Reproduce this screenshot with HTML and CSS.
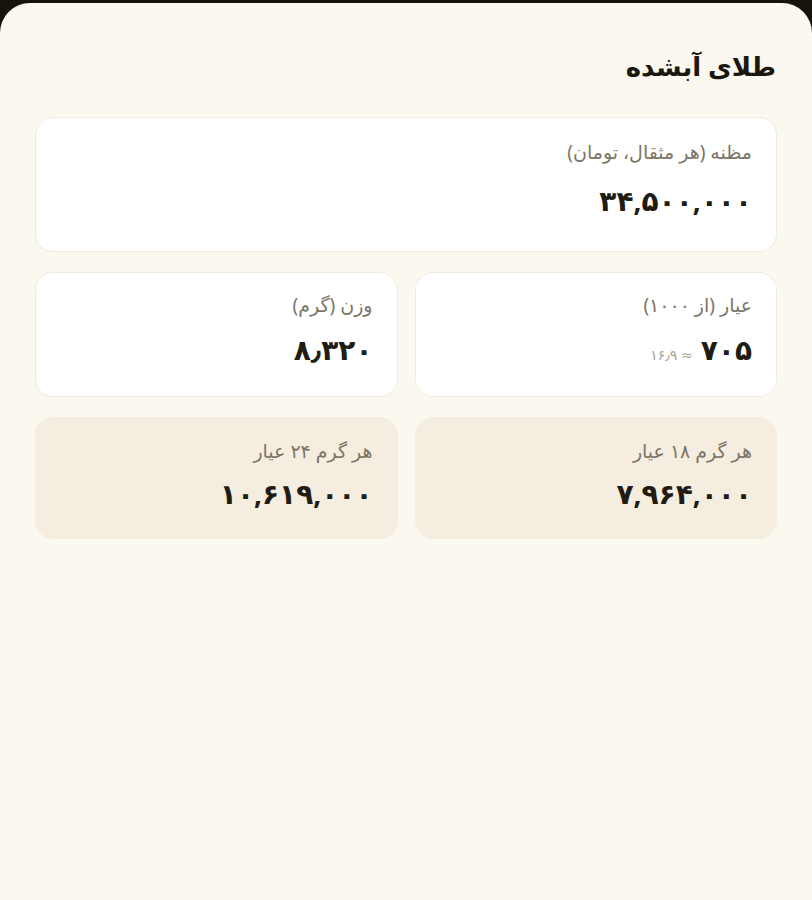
FILE: index.html
```html
<!DOCTYPE html>
<html lang="fa" dir="rtl">
<head>
    <meta charset="UTF-8">
    <meta name="viewport" content="width=device-width, initial-scale=1.0">
    <title>طلای آبشده</title>
    <link rel="stylesheet" href="styles.css">
</head>
<body>
    <div class="sheet">
        <h1 class="title">طلای آبشده</h1>

        <div class="card">
            <div class="label">مظنه (هر مثقال، تومان)</div>
            <div class="value">۳۴,۵۰۰,۰۰۰</div>
        </div>

        <div class="row">
            <div class="card">
                <div class="label">عیار (از ۱۰۰۰)</div>
                <div class="value">
                    <span>۷۰۵</span>
                    <span class="approx">≈ ۱۶٫۹</span>
                </div>
            </div>
            <div class="card">
                <div class="label">وزن (گرم)</div>
                <div class="value">۸٫۳۲۰</div>
            </div>
        </div>

        <div class="row">
            <div class="card card-tint">
                <div class="label">هر گرم ۱۸ عیار</div>
                <div class="value">۷,۹۶۴,۰۰۰</div>
            </div>
            <div class="card card-tint">
                <div class="label">هر گرم ۲۴ عیار</div>
                <div class="value">۱۰,۶۱۹,۰۰۰</div>
            </div>
        </div>
    </div>
</body>
</html>
```

FILE: styles.css
```css
html, body {
    margin: 0;
    height: 100%;
}
body {
    background-color: #16130c;
    font-family: "Noto Sans", "DejaVu Sans", sans-serif;
    color: #221d13;
    padding-top: 3px;
    box-sizing: border-box;
}
.sheet {
    background-color: #faf8ef;
    border-radius: 30px 30px 0 0;
    min-height: 100%;
    padding: 44px 35px 40px;
    box-sizing: border-box;
}
.title {
    margin: 0 1px 32px 0;
    font-size: 26px;
    font-weight: 800;
    line-height: 38px;
    color: #1b170f;
}
.card {
    background-color: #fff;
    border: 1px solid #efebdf;
    border-radius: 18px;
    padding: 20px 24px 0;
    height: 135px;
    box-sizing: border-box;
}
.row {
    display: flex;
    gap: 17px;
    margin-top: 20px;
}
.row .card {
    flex: 1;
    height: 125px;
    padding-top: 18px;
}
.row .card-tint {
    background-color: #f4ede0;
    border-color: #f4ede0;
    height: 122px;
    padding-top: 19px;
}
.label {
    font-size: 19px;
    line-height: 28px;
    color: #7b7566;
}
.value {
    display: flex;
    align-items: baseline;
    gap: 8px;
    margin-top: 15px;
    font-size: 28px;
    font-weight: bold;
    line-height: 38px;
    color: #211c12;
}
.row .value {
    margin-top: 11px;
}
.row .card-tint .value {
    margin-top: 9px;
}
.approx {
    font-size: 14px;
    font-weight: normal;
    color: #a8a390;
}
```
